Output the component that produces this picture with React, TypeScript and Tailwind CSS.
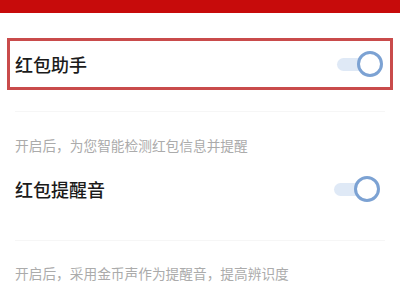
import React from "react";

function Toggle() {
  return (
    <div className="relative w-[46px] h-[26px] shrink-0">
      <div className="absolute left-0 top-[7px] w-[36px] h-[13px] rounded-full bg-[#dfe9f6]" />
      <div className="absolute right-0 top-0 w-[26px] h-[26px] rounded-full border-[3px] border-[#7ca2d3] bg-white" />
    </div>
  );
}

export default function App() {
  const font = { fontFamily: '"Noto Sans CJK SC", "Noto Sans", sans-serif' };
  return (
    <div className="w-[400px] h-[300px] bg-white overflow-hidden flex flex-col" style={font}>
      <div className="h-[13px] bg-[#c70b0b]" />

      <div className="mx-[7px] mt-[25px] h-[52px] border-[3px] border-[#c94b4b] flex items-center justify-between pl-[5px] pr-[7px]">
        <span className="text-[18px] leading-[26px] font-medium text-[#1b1b1b]">红包助手</span>
        <Toggle />
      </div>

      <div className="mx-[15px] mt-[21px] h-px bg-[#f6f6f6]" />

      <p className="mx-[15px] mt-[23px] text-[13.7px] leading-[20px] text-[#ababab]">
        开启后，为您智能检测红包信息并提醒
      </p>

      <div className="mt-[21px] flex items-center justify-between pl-[15px] pr-[20px] h-[26px]">
        <span className="text-[18px] leading-[26px] font-medium text-[#1b1b1b]">红包提醒音</span>
        <Toggle />
      </div>

      <div className="mx-[15px] mt-[38px] h-px bg-[#f6f6f6]" />

      <p className="mx-[15px] mt-[22px] text-[13.7px] leading-[20px] text-[#ababab]">
        开启后，采用金币声作为提醒音，提高辨识度
      </p>
    </div>
  );
}
